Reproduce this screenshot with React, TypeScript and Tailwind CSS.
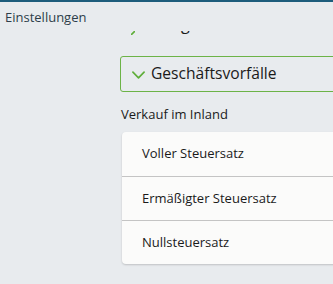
import React from "react";

const font = { fontFamily: '"Open Sans", "Noto Sans", Arial, sans-serif' };

function Chevron({ className }: { className?: string }) {
  return (
    <svg viewBox="0 0 14 8" className={className} fill="none">
      <path d="M1 1 L7 7 L13 1" stroke="#5fae3a" strokeWidth="1.8" strokeLinecap="round" strokeLinejoin="round" />
    </svg>
  );
}

export default function App() {
  const rows = ["Voller Steuersatz", "Ermäßigter Steuersatz", "Nullsteuersatz"];
  return (
    <div
      className="w-[333px] h-[284px] overflow-hidden bg-[#e8ebee] border-t-2 border-[#1d5d7c]"
      style={font}
    >
      <div className="h-[29px] pl-[5px] pt-[7px] text-[13px] leading-[16px] text-[#2d3e4a]">
        Einstellungen
      </div>
      <div className="h-[4px] overflow-hidden flex items-start">
        <svg viewBox="0 0 4 4" className="ml-[131px] w-[4px] h-[4px] shrink-0" fill="none">
          <path d="M0.6 3.4 L3.4 0.6" stroke="#5fae3a" strokeWidth="1.6" strokeLinecap="round" />
        </svg>
        <span className="ml-[46px] -mt-[15px] text-[16px] leading-[16px] text-[#1a1a1a] whitespace-nowrap">
          g
        </span>
      </div>
      <div className="ml-[120px] w-[280px] mt-[21px]">
        <div className="h-[36px] border border-[#6cb347] rounded-[3px] flex items-center pl-[11px] gap-[6px]">
          <Chevron className="w-[13px] h-[8px] mt-[1px]" />
          <span className="text-[15.6px] text-[#1a1a1a] leading-none whitespace-nowrap">Geschäftsvorfälle</span>
        </div>
        <div className="mt-[14px] pl-[1px] text-[13px] leading-[16px] text-[#1a1a1a]">Verkauf im Inland</div>
        <div className="mt-[10px] ml-[2px] bg-[#fbfbfa] rounded-[4px] shadow-[0_1px_2px_rgba(0,0,0,0.18)]">
          {rows.map((r, i) => (
            <div
              key={r}
              className={`h-[44px] flex items-center pl-[20px] text-[13px] text-[#1a1a1a] ${i > 0 ? "border-t border-[#c4c4c4]" : ""}`}
            >
              {r}
            </div>
          ))}
        </div>
      </div>
    </div>
  );
}
